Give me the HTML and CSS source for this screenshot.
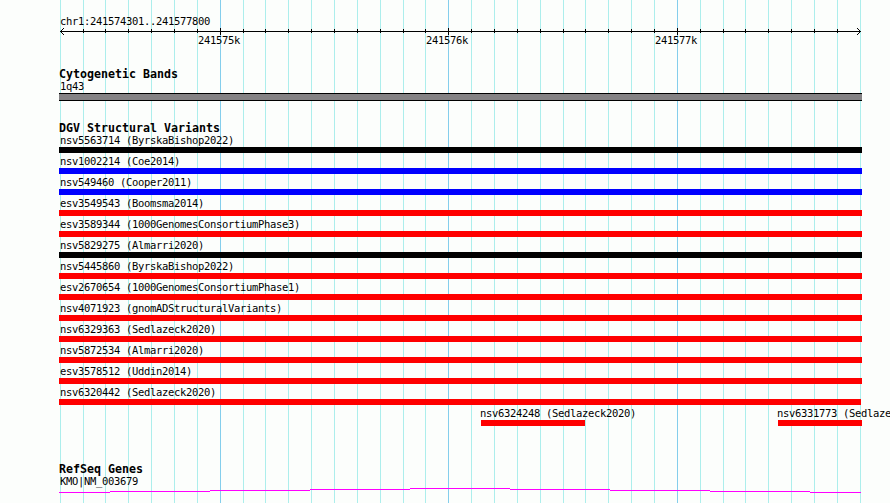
FILE: index.html
```
<!DOCTYPE html>
<html lang="en">
<head>
    <meta charset="utf-8">
    <title>chr1:241574301..241577800</title>
    <link rel="stylesheet" href="styles.css">
</head>
<body>
  <div class="browser">
    <!-- 100 bp grid, darker line every 1 kb -->
    <svg class="grid" width="890" height="503" shape-rendering="crispEdges">
      <path class="minor" d="M60.5 0v503M83.5 0v503M105.5 0v503M128.5 0v503M151.5 0v503M174.5 0v503M197.5 0v503M243.5 0v503M265.5 0v503M288.5 0v503M311.5 0v503M334.5 0v503M357.5 0v503M380.5 0v503M403.5 0v503M425.5 0v503M471.5 0v503M494.5 0v503M517.5 0v503M540.5 0v503M563.5 0v503M585.5 0v503M608.5 0v503M631.5 0v503M654.5 0v503M700.5 0v503M723.5 0v503M745.5 0v503M768.5 0v503M791.5 0v503M814.5 0v503M837.5 0v503M860.5 0v503"/>
      <path class="major" d="M220.5 0v503M448.5 0v503M677.5 0v503"/>
    </svg>

    <div class="ruler">
      <div class="label">chr1:241574301..241577800</div>
      <svg class="axis" width="802" height="7" shape-rendering="crispEdges">
        <path d="M1 3.5h801M24.5 1v4M46.5 1v4M69.5 1v4M92.5 1v4M115.5 1v4M138.5 1v4M161.5 0v7M184.5 1v4M206.5 1v4M229.5 1v4M252.5 1v4M275.5 1v4M298.5 1v4M321.5 1v4M344.5 1v4M366.5 1v4M389.5 0v7M412.5 1v4M435.5 1v4M458.5 1v4M481.5 1v4M504.5 1v4M526.5 1v4M549.5 1v4M572.5 1v4M595.5 1v4M618.5 0v7M641.5 1v4M664.5 1v4M686.5 1v4M709.5 1v4M732.5 1v4M755.5 1v4M778.5 1v4"/>
        <path class="arrow" d="M2 2h1v1h-1zM3 1h1v1h-1zM4 0h1v1h-1zM2 4h1v1h-1zM3 5h1v1h-1zM4 6h1v1h-1zM800 2h1v1h-1zM799 1h1v1h-1zM798 0h1v1h-1zM800 4h1v1h-1zM799 5h1v1h-1zM798 6h1v1h-1z"/>
      </svg>
      <div class="ticks">
        <span>241575k</span>
        <span>241576k</span>
        <span>241577k</span>
      </div>
    </div>

    <div class="track cyto">
      <h2>Cytogenetic Bands</h2>
      <div class="label">1q43</div>
      <div class="band"></div>
    </div>

    <div class="track variants">
      <h2>DGV Structural Variants</h2>
      <div class="row"><div class="label">nsv5563714 (ByrskaBishop2022)</div><div class="bar black"></div></div>
      <div class="row"><div class="label">nsv1002214 (Coe2014)</div><div class="bar blue"></div></div>
      <div class="row"><div class="label">nsv549460 (Cooper2011)</div><div class="bar blue"></div></div>
      <div class="row"><div class="label">esv3549543 (Boomsma2014)</div><div class="bar"></div></div>
      <div class="row"><div class="label">esv3589344 (1000GenomesConsortiumPhase3)</div><div class="bar"></div></div>
      <div class="row"><div class="label">nsv5829275 (Almarri2020)</div><div class="bar black"></div></div>
      <div class="row"><div class="label">nsv5445860 (ByrskaBishop2022)</div><div class="bar"></div></div>
      <div class="row"><div class="label">esv2670654 (1000GenomesConsortiumPhase1)</div><div class="bar"></div></div>
      <div class="row"><div class="label">nsv4071923 (gnomADStructuralVariants)</div><div class="bar"></div></div>
      <div class="row"><div class="label">nsv6329363 (Sedlazeck2020)</div><div class="bar"></div></div>
      <div class="row"><div class="label">nsv5872534 (Almarri2020)</div><div class="bar"></div></div>
      <div class="row"><div class="label">esv3578512 (Uddin2014)</div><div class="bar"></div></div>
      <div class="row"><div class="label">nsv6320442 (Sedlazeck2020)</div><div class="bar short"></div></div>
      <div class="split">
        <div class="row"><div class="label">nsv6324248 (Sedlazeck2020)</div><div class="bar"></div></div>
        <div class="row"><div class="label">nsv6331773 (Sedlazeck2020)</div><div class="bar"></div></div>
      </div>
    </div>

    <div class="track genes">
      <h2>RefSeq Genes</h2>
      <div class="label">KMO|NM_003679</div>
      <svg class="intron" width="802" height="5" shape-rendering="crispEdges">
        <path d="M0 4.5H51M51 3.5H151M151 2.5H251M251 1.5H351M351 .5H451M451 1.5H551M551 2.5H651M651 3.5H751M751 4.5H802"/>
      </svg>
    </div>
  </div>
</body>
</html>
```
FILE: styles.css
```
*{
    margin: 0;
    box-sizing: border-box;
}
body{
    background-color: #fcfefc;
    color: black;
    font-family: "DejaVu Sans Mono", monospace;
}
.browser{
    position: relative;
    width: 890px;
    height: 503px;
    overflow: hidden;
    padding: 15px 28px 0 59px;
}
.grid{
    position: absolute;
    top: 0;
    left: 0;
    z-index: -1;
}
.grid path{
    fill: none;
    stroke-width: 1;
}
.minor{
    stroke: #aceeec;
}
.major{
    stroke: #84ceec;
}
svg{
    display: block;
}
.label, .ticks{
    height: 13px;
    font-size: 10.5px;
    line-height: 13px;
    letter-spacing: -0.321px;
    white-space: nowrap;
}
.label{
    padding-left: 1px;
}
h2{
    height: 12px;
    font-size: 11.63px;
    line-height: 12px;
    font-weight: bold;
    white-space: nowrap;
}

/* ruler */
.ruler{
    height: 53px;
}
.axis path{
    fill: none;
    stroke: black;
}
.axis .arrow{
    fill: black;
    stroke: none;
}
.ticks{
    display: grid;
    grid-template-columns: 228px 229px 1fr;
    padding-left: 139px;
    margin-top: -1px;
}

/* tracks */
.cyto{
    height: 54px;
}
.band{
    height: 8px;
    background-color: #848284;
    border-top: 1px solid black;
    border-bottom: 1px solid black;
}
.variants{
    height: 341px;
}
.row{
    height: 21px;
}
.bar{
    height: 6px;
    background-color: red;
}
.black{
    background-color: black;
}
.blue{
    background-color: blue;
}
.short{
    width: 802px;
}
.split{
    display: grid;
    grid-template-columns: 104px 84px;
    column-gap: 193px;
    padding-left: 422px;
}
.split .label{
    padding-left: 0;
    margin-left: -1px;
}
.intron path{
    fill: none;
    stroke: magenta;
}
```
